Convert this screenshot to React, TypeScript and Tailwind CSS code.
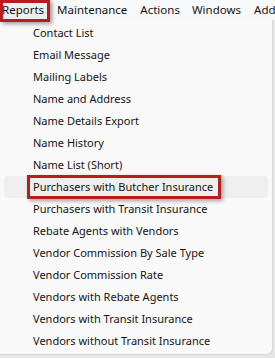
import React from "react";

const items = [
  "Contact List",
  "Email Message",
  "Mailing Labels",
  "Name and Address",
  "Name Details Export",
  "Name History",
  "Name List (Short)",
  "Purchasers with Butcher Insurance",
  "Purchasers with Transit Insurance",
  "Rebate Agents with Vendors",
  "Vendor Commission By Sale Type",
  "Vendor Commission Rate",
  "Vendors with Rebate Agents",
  "Vendors with Transit Insurance",
  "Vendors without Transit Insurance",
];

export default function App() {
  return (
    <div
      className="w-[275px] h-[358px] overflow-hidden bg-[#e6e6e6] text-[11px] text-[#141414] relative"
      style={{ fontFamily: '"Noto Sans", "Open Sans", sans-serif' }}
    >
      <div className="h-[20px] bg-[#f7f8fa] flex items-center whitespace-nowrap text-[11.5px]">
        <div className="relative h-[20px] flex items-center pl-[2px] pr-[9px] bg-[#eeeeee] shrink-0">
          <span>Reports</span>
          <div className="absolute left-0 top-0 w-[50px] h-[22px] border-[3px] border-[#b81c1c] shadow-[2px_2px_4px_rgba(0,0,0,0.35)]" />
        </div>
        <span className="ml-[4px] shrink-0">Maintenance</span>
        <span className="ml-[13px] shrink-0">Actions</span>
        <span className="ml-[12px] shrink-0">Windows</span>
        <span className="ml-[13px] shrink-0">Add</span>
      </div>
      <div className="flex">
        <div className="w-[273px] h-[335px] bg-[#f9f9f9] rounded-br-[6px] border-r border-b border-[#d6d6d6] pt-[2px] px-[4px]">
          {items.map((it) => {
            const sel = it === "Purchasers with Butcher Insurance";
            return (
              <div
                key={it}
                className={
                  "h-[22px] flex items-center pl-[29px] rounded-[4px] relative " +
                  (sel ? "bg-[#efefef]" : "")
                }
              >
                <span className="relative">{it}</span>
                {sel && (
                  <div className="absolute left-[23px] top-[-1px] w-[194px] h-[24px] border-[3px] border-[#b81c1c] shadow-[2px_2px_4px_rgba(0,0,0,0.35)]" />
                )}
              </div>
            );
          })}
        </div>
      </div>
    </div>
  );
}
